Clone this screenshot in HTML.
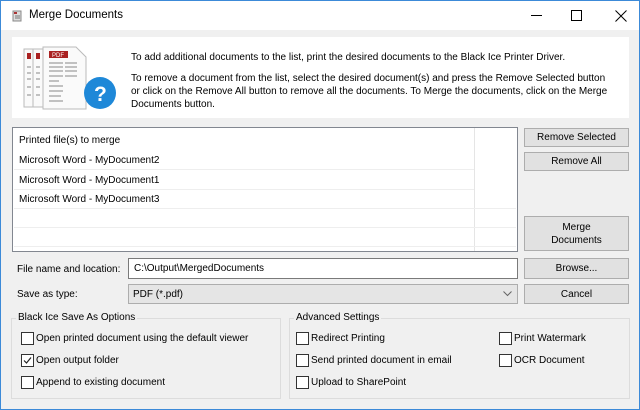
<!DOCTYPE html>
<html><head><style>
*{box-sizing:border-box;margin:0;padding:0}
body{width:640px;height:410px;overflow:hidden;background:#f0f0f0;font-family:"Liberation Sans",sans-serif;font-size:10px;color:#000;position:relative}
.win{position:absolute;left:0;top:0;width:640px;height:410px;border:1px solid #3c8ad8;background:#f0f0f0}
.title{position:absolute;left:0;top:0;width:638px;height:29px;background:#fff}
.a{position:absolute}
.btn{position:absolute;background:#e1e1e1;border:1px solid #adadad;text-align:center;font-size:10px;display:flex;align-items:center;justify-content:center;line-height:13px}
.cb{position:absolute;width:13px;height:13px;border:1px solid #333;background:#fff}
.row{position:absolute;left:1px;width:460px;height:1px;background:#eee}
</style></head><body>
<div class="win">
<div class="title">
 <svg class="a" style="left:11px;top:9px" width="12" height="12"><rect x="1" y="1" width="8" height="10" fill="#ddd" stroke="#888"/><rect x="2" y="2" width="3" height="2" fill="#a33"/><path d="M3 6h5M3 8h5" stroke="#777"/></svg>
 <div class="a" style="left:28px;top:8px;font-size:11.5px">Merge Documents</div>
 <div class="a" style="left:530px;top:14px;width:11px;height:1px;background:#000"></div>
 <div class="a" style="left:570px;top:9px;width:11px;height:11px;border:1px solid #000"></div>
 <svg class="a" style="left:614px;top:9px" width="12" height="12"><path d="M0.5 0.5L11.5 11.5M11.5 0.5L0.5 11.5" stroke="#000"/></svg>
</div>
<div class="a" style="left:11px;top:36px;width:617px;height:81px;background:#fff"></div>
<svg class="a" style="left:20px;top:42px" width="100" height="74">
 <g fill="#fafafa" stroke="#bbb">
 <path d="M3 6h30l8 8v50H3z"/><path d="M12 6h30l8 8v50H12z"/><path d="M22 4h33l10 10v52H22z"/>
 </g>
 <rect x="6" y="10" width="4" height="6" fill="#a22"/><rect x="15" y="10" width="4" height="6" fill="#a22"/>
 <rect x="28" y="8" width="19" height="7" fill="#a22"/><text x="31" y="14" font-size="6" fill="#fff" font-family="Liberation Sans">PDF</text>
 <g stroke="#888" stroke-width="1"><path d="M28 20h14M44 20h12M28 24h14M44 24h12M28 28h14M44 28h12M28 33h14M44 33h12M28 38h10M28 43h14M28 48h14M28 53h12M28 58h14"/><path d="M6 24h4M6 30h4M6 36h4M6 44h4M6 52h4M15 24h4M15 30h4M15 36h4M15 44h4M15 52h4"/></g>
 <circle cx="79" cy="50" r="16" fill="#1e88d8"/>
 <text x="73" y="58" font-size="21" font-weight="bold" fill="#fff" font-family="Liberation Sans">?</text>
</svg>
<div class="a" style="left:130px;top:51px">To add additional documents to the list, print the desired documents to the Black Ice Printer Driver.</div>
<div class="a" style="left:130px;top:71px;width:485px;line-height:13px">To remove a document from the list, select the desired document(s) and press the Remove Selected button or click on the Remove All button to remove all the documents. To Merge the documents, click on the Merge Documents button.</div>

<div class="a" style="left:11px;top:126px;width:506px;height:125px;background:#fff;border:1px solid #828790">
 <div class="a" style="left:461px;top:0;width:1px;height:123px;background:#e5e5e5"></div>
 <div class="a" style="left:6px;top:7px">Printed file(s) to merge</div>
 <div class="a" style="left:6px;top:27px">Microsoft Word - MyDocument2</div>
 <div class="row" style="top:41px"></div>
 <div class="a" style="left:6px;top:47px">Microsoft Word - MyDocument1</div>
 <div class="row" style="top:61px"></div>
 <div class="a" style="left:6px;top:66px">Microsoft Word - MyDocument3</div>
 <div class="row" style="top:80px;width:502px"></div>
 <div class="row" style="top:99px;width:502px"></div>
 <div class="row" style="top:118px;width:502px"></div>
</div>
<div class="btn" style="left:523px;top:127px;width:105px;height:19px">Remove Selected</div>
<div class="btn" style="left:523px;top:151px;width:105px;height:19px">Remove All</div>
<div class="btn" style="left:523px;top:215px;width:105px;height:35px">Merge<br>Documents</div>
<div class="a" style="left:16px;top:263px">File name and location:</div>
<div class="a" style="left:127px;top:257px;width:390px;height:21px;background:#fff;border:1px solid #7a7a7a;padding:4px 0 0 5px">C:\Output\MergedDocuments</div>
<div class="btn" style="left:523px;top:257px;width:105px;height:21px">Browse...</div>
<div class="a" style="left:16px;top:288px">Save as type:</div>
<div class="a" style="left:127px;top:283px;width:390px;height:20px;background:#e5e5e5;border:1px solid #adadad;padding:4px 0 0 4px">PDF (*.pdf)</div>
<svg class="a" style="left:502px;top:290px" width="9" height="6"><path d="M0.5 0.5L4.5 4.5L8.5 0.5" stroke="#666" fill="none"/></svg>
<div class="btn" style="left:523px;top:283px;width:105px;height:20px">Cancel</div>

<div class="a" style="left:10px;top:317px;width:270px;height:81px;border:1px solid #dcdcdc"></div>
<div class="a" style="left:15px;top:311px;background:#f0f0f0;padding:0 2px">Black Ice Save As Options</div>
<div class="a" style="left:288px;top:317px;width:341px;height:81px;border:1px solid #dcdcdc"></div>
<div class="a" style="left:293px;top:311px;background:#f0f0f0;padding:0 2px">Advanced Settings</div>

<div class="cb" style="left:20px;top:331px"></div><div class="a" style="left:35px;top:332px">Open printed document using the default viewer</div>
<div class="cb" style="left:20px;top:353px"></div><svg class="a" style="left:21px;top:354px" width="11" height="11"><path d="M2 5.5L4.5 8L9 2.5" stroke="#222" fill="none" stroke-width="1.2"/></svg><div class="a" style="left:35px;top:354px">Open output folder</div>
<div class="cb" style="left:20px;top:375px"></div><div class="a" style="left:35px;top:376px">Append to existing document</div>

<div class="cb" style="left:295px;top:331px"></div><div class="a" style="left:310px;top:332px">Redirect Printing</div>
<div class="cb" style="left:295px;top:353px"></div><div class="a" style="left:310px;top:354px">Send printed document in email</div>
<div class="cb" style="left:295px;top:375px"></div><div class="a" style="left:310px;top:376px">Upload to SharePoint</div>
<div class="cb" style="left:498px;top:331px"></div><div class="a" style="left:513px;top:332px">Print Watermark</div>
<div class="cb" style="left:498px;top:353px"></div><div class="a" style="left:513px;top:354px">OCR Document</div>
</div>
</body></html>
